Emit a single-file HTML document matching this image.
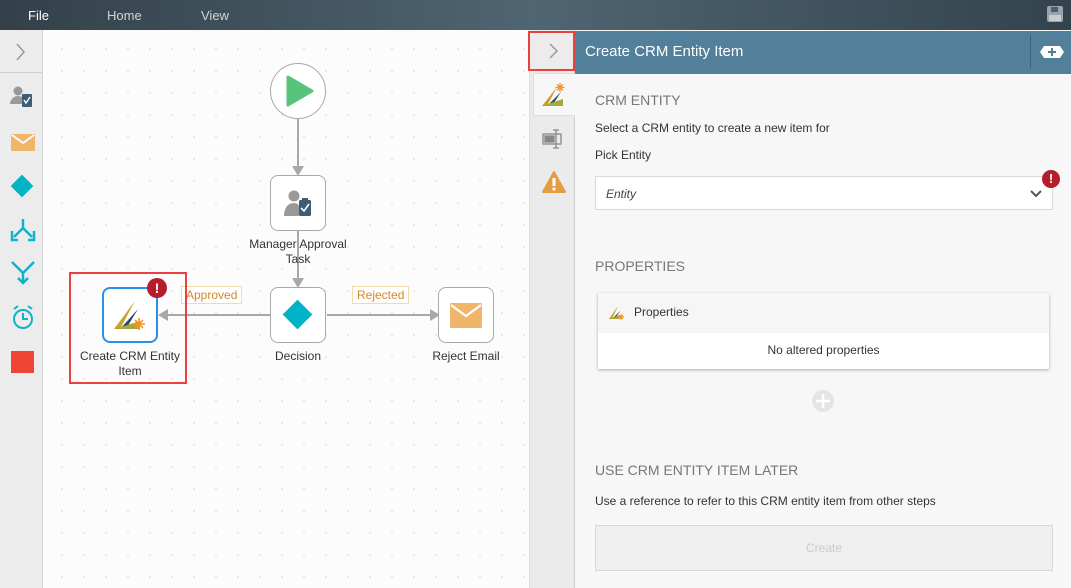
<!DOCTYPE html>
<html><head><style>
*{box-sizing:border-box;margin:0;padding:0}
body{width:1071px;height:588px;overflow:hidden;font-family:"Liberation Sans",sans-serif;background:#fff;position:relative;color:#333}
.abs{position:absolute}
#top{left:0;top:0;width:1071px;height:30px;background:linear-gradient(90deg,#334049,#4f6571 50%,#33434d);}
#top span{position:absolute;top:8px;font-size:13px;color:#cfd6da}
#left{left:0;top:30px;width:43px;height:558px;background:#ececec;border-right:1px solid #d5d5d5}
#canvas{left:43px;top:30px;width:486px;height:558px;background-color:#fcfcfc;background-image:radial-gradient(#dcdcdc 0.7px,transparent 1px);background-size:22px 22px;background-position:8px 8px}
#tabs{left:529px;top:30px;width:46px;height:558px;background:#ebebeb;border-left:1px solid #ddd;border-right:1px solid #d0d0d0}
#panel{left:575px;top:30px;width:496px;height:558px;background:#f7f7f7}
#hdr{left:575px;top:31px;width:496px;height:43px;background:#527f99;color:#fff;font-size:15px}
.node{position:absolute;width:56px;height:56px;background:#fff;border:1px solid #a8a8a8;border-radius:8px}
.lbl{position:absolute;font-size:12px;color:#333;text-align:center;width:130px;line-height:15px}
.tag{position:absolute;font-size:12px;color:#d0882a;border:1px solid #f3d9b0;background:#fff;padding:1px 4px;line-height:14px}
.h{position:absolute;left:595px;font-size:14px;color:#777}
.t{position:absolute;left:595px;font-size:12px;color:#333}
</style></head><body>
<div id="top" class="abs"><span style="left:28px;color:#fff">File</span><span style="left:107px">Home</span><span style="left:201px">View</span>
<svg class="abs" style="left:1047px;top:6px" width="16" height="16"><rect x="0" y="0" width="16" height="16" rx="2" fill="#9aa3a8"/><rect x="4" y="1" width="7" height="5" fill="#4e5f69"/><rect x="2" y="9" width="12" height="6" fill="#c8cdd0"/></svg></div>
<div id="left" class="abs">
<div class="abs" style="left:0;top:0;width:42px;height:43px;border-bottom:1px solid #d0d0d0"></div>
<svg class="abs" style="left:15px;top:12px" width="12" height="20"><path d="M2 2 L9 10 L2 18" stroke="#999" stroke-width="1.5" fill="none"/></svg>
<svg class="abs" style="left:10px;top:55px" width="24" height="26"><circle cx="8" cy="6" r="4.5" fill="#999"/><path d="M0 18 Q2 11 8 11 Q12 11 13 14 L13 19 L0 19Z" fill="#999"/><rect x="12" y="9" width="10" height="13" rx="1" fill="#3d5c75"/><path d="M14 15 l2 3 l4-6" stroke="#fff" stroke-width="1.4" fill="none"/></svg>
<svg class="abs" style="left:11px;top:104px" width="24" height="17"><rect width="24" height="17" rx="1" fill="#efb56a"/><path d="M1 1 L12 9 L23 1" stroke="#fff" stroke-width="1.8" fill="none"/></svg>
<div class="abs" style="left:14px;top:148px;width:16px;height:16px;background:#00b3c6;transform:rotate(45deg)"></div>
<svg class="abs" style="left:10px;top:188px" width="26" height="24" fill="none" stroke="#0fb3c9" stroke-width="2.5"><path d="M13 1 V10 L4 19 M13 10 L22 19"/><path d="M2 13 V22 H8 M24 13 V22 H18"/></svg>
<svg class="abs" style="left:10px;top:230px" width="26" height="26" fill="none" stroke="#0fb3c9" stroke-width="2.5"><path d="M2 2 L13 13 L24 2 M13 13 V22"/><path d="M8 18 L13 23 L18 18"/></svg>
<svg class="abs" style="left:11px;top:274px" width="24" height="26" fill="none" stroke="#0fb3c9" stroke-width="2"><circle cx="12" cy="15" r="9"/><path d="M12 9 V15 H17 M3 5 L7 2 M21 5 L17 2"/></svg>
<div class="abs" style="left:11px;top:321px;width:23px;height:22px;background:#f04434"></div>
</div>
<div id="canvas" class="abs"></div>
<!-- flow -->
<div class="abs" style="left:297px;top:118px;width:2px;height:57px;background:#a8a8a8"></div>
<div class="abs" style="left:297px;top:231px;width:2px;height:56px;background:#a8a8a8"></div>
<div class="abs" style="left:163px;top:314px;width:108px;height:2px;background:#a8a8a8"></div>
<div class="abs" style="left:327px;top:314px;width:106px;height:2px;background:#a8a8a8"></div>
<svg class="abs" style="left:158px;top:309px" width="10" height="12"><path d="M0 6 L10 0 L10 12Z" fill="#a8a8a8"/></svg>
<svg class="abs" style="left:430px;top:309px" width="10" height="12"><path d="M10 6 L0 0 L0 12Z" fill="#a8a8a8"/></svg>
<svg class="abs" style="left:292px;top:166px" width="12" height="10"><path d="M6 10 L0 0 L12 0Z" fill="#a8a8a8"/></svg>
<svg class="abs" style="left:292px;top:278px" width="12" height="10"><path d="M6 10 L0 0 L12 0Z" fill="#a8a8a8"/></svg>
<div class="abs" style="left:270px;top:63px;width:56px;height:56px;border-radius:50%;border:1px solid #a8a8a8;background:#fff"></div>
<svg class="abs" style="left:286px;top:75px" width="28" height="32"><path d="M2 2 L26 16 L2 30Z" fill="#58c47b" stroke="#58c47b" stroke-width="3" stroke-linejoin="round"/></svg>
<div class="node" style="left:270px;top:175px"></div>
<svg class="abs" style="left:283px;top:188px" width="30" height="30"><circle cx="11" cy="8" r="5.5" fill="#999"/><path d="M1 27 Q2 15 11 15 Q15 15 16 18 L16 28 L1 28Z" fill="#999"/><rect x="16" y="12" width="12" height="16" rx="1.5" fill="#3d5c75"/><rect x="19" y="10" width="6" height="3" fill="#3d5c75"/><path d="M18 20 l3 3 l5-7" stroke="#fff" stroke-width="1.6" fill="none"/></svg>
<div class="lbl" style="left:233px;top:237px">Manager Approval<br>Task</div>
<div class="node" style="left:270px;top:287px"></div>
<div class="abs" style="left:287px;top:304px;width:21px;height:21px;background:#00b3c6;transform:rotate(45deg)"></div>
<div class="lbl" style="left:233px;top:349px">Decision</div>
<div class="node" style="left:438px;top:287px"></div>
<svg class="abs" style="left:450px;top:303px" width="32" height="25"><rect width="32" height="25" rx="1" fill="#efb56a"/><path d="M1 2 L16 13 L31 2" stroke="#fff" stroke-width="2.2" fill="none"/></svg>
<div class="lbl" style="left:401px;top:349px">Reject Email</div>
<div class="tag" style="left:181px;top:286px">Approved</div>
<div class="tag" style="left:352px;top:286px">Rejected</div>
<div class="abs" style="left:69px;top:272px;width:118px;height:112px;border:2px solid #ea4040"></div>
<div class="node" style="left:102px;top:287px;border:2px solid #2b8fe8"></div>
<svg class="abs" style="left:112px;top:297px" width="36" height="36"><path d="M2 32 L23 4 L8 32Z" fill="#c9a227"/><path d="M8 32 L26 12 L14 32Z" fill="#2e4e6a"/><path d="M3 32 L28 24 L28 32Z" fill="#a8a838"/><g stroke="#f7931e" stroke-width="1.6"><path d="M27 21 V33 M21 27 H33 M23 23 L31 31 M31 23 L23 31"/></g></svg>
<div class="abs" style="left:147px;top:278px;width:20px;height:20px;border-radius:50%;background:#b51d2a;color:#fff;font-weight:bold;font-size:14px;text-align:center;line-height:20px">!</div>
<div class="lbl" style="left:65px;top:349px">Create CRM Entity<br>Item</div>
<!-- tabs -->
<div id="tabs" class="abs"></div>
<div class="abs" style="left:528px;top:31px;width:47px;height:40px;border:2px solid #ea4040;background:#ececec"></div>
<svg class="abs" style="left:548px;top:42px" width="12" height="20"><path d="M2 2 L9 9 L2 16" stroke="#999" stroke-width="1.5" fill="none"/></svg>
<div class="abs" style="left:533px;top:73px;width:43px;height:43px;background:#f7f7f7;border:1px solid #ddd;border-right:none"></div>
<svg class="abs" style="left:541px;top:82px" width="26" height="26"><path d="M1 24 L16 5 L6 24Z" fill="#c9a227"/><path d="M6 24 L20 10 L11 24Z" fill="#2e4e6a"/><path d="M1 24 L22 17 L22 24Z" fill="#a8a838"/><g stroke="#f7931e" stroke-width="1.3"><path d="M19 1 V10 M14.5 5.5 H23.5 M16 2.5 L22 8.5 M22 2.5 L16 8.5"/></g></svg>
<svg class="abs" style="left:541px;top:128px" width="24" height="22" fill="none" stroke="#888" stroke-width="1.3"><rect x="2" y="6" width="18" height="10"/><rect x="4" y="8" width="9" height="6" fill="#888"/><path d="M15 2 V20 M12 2 H18 M12 20 H18"/></svg>
<svg class="abs" style="left:542px;top:171px" width="24" height="22"><path d="M12 1 L23 21 L1 21Z" fill="#e59c42" stroke="#e59c42" stroke-width="2" stroke-linejoin="round"/><rect x="10.5" y="7" width="3" height="8" fill="#fff"/><circle cx="12" cy="18" r="1.6" fill="#fff"/></svg>
<!-- panel -->
<div id="panel" class="abs"></div>
<div id="hdr" class="abs"><span class="abs" style="left:10px;top:12px">Create CRM Entity Item</span>
<div class="abs" style="left:455px;top:4px;width:1px;height:33px;background:#3c6178"></div>
<svg class="abs" style="left:464px;top:14px" width="26" height="14"><path d="M5 1 H21 L25 7 L21 13 H5 L1 7Z" fill="#fff"/><path d="M13 3 V11 M9 7 H17" stroke="#527f99" stroke-width="2"/></svg></div>
<div class="h" style="top:92px">CRM ENTITY</div>
<div class="t" style="top:121px">Select a CRM entity to create a new item for</div>
<div class="t" style="top:148px">Pick Entity</div>
<div class="abs" style="left:595px;top:176px;width:458px;height:34px;background:#fff;border:1px solid #d8d8d8"><span class="abs" style="left:10px;top:10px;font-size:12px;font-style:italic;color:#444">Entity</span>
<svg class="abs" style="left:433px;top:12px" width="14" height="10"><path d="M2 2 L7 7 L12 2" stroke="#555" stroke-width="2" fill="none"/></svg></div>
<div class="abs" style="left:1042px;top:170px;width:18px;height:18px;border-radius:50%;background:#b51d2a;color:#fff;font-weight:bold;font-size:13px;text-align:center;line-height:18px">!</div>
<div class="h" style="top:258px">PROPERTIES</div>
<div class="abs" style="left:598px;top:293px;width:451px;height:76px;background:#fff;box-shadow:0 1px 3px rgba(0,0,0,.3)">
<div class="abs" style="left:0;top:0;width:451px;height:40px;background:#f6f6f6"></div>
<svg class="abs" style="left:10px;top:11px" width="16" height="16"><path d="M1 15 L10 2 L4 15Z" fill="#c9a227"/><path d="M4 15 L12 7 L7 15Z" fill="#2e4e6a"/><path d="M1 15 L12 11 L12 15Z" fill="#a8a838"/><g stroke="#f7931e" stroke-width="1"><path d="M13 10 V16 M10 13 H16 M11 11 L15 15 M15 11 L11 15"/></g></svg>
<span class="abs" style="left:36px;top:12px;font-size:12px">Properties</span>
<span class="abs" style="left:0;top:50px;width:451px;text-align:center;font-size:12px">No altered properties</span></div>
<svg class="abs" style="left:811px;top:389px" width="24" height="24"><circle cx="12" cy="12" r="11" fill="#e4e4e4"/><path d="M12 5 V19 M5 12 H19" stroke="#fff" stroke-width="2.5"/></svg>
<div class="h" style="top:462px">USE CRM ENTITY ITEM LATER</div>
<div class="t" style="top:494px">Use a reference to refer to this CRM entity item from other steps</div>
<div class="abs" style="left:595px;top:525px;width:458px;height:46px;background:#efefef;border:1px solid #d8d8d8;text-align:center;line-height:44px;font-size:12px;color:#ccc">Create</div>
</body></html>
